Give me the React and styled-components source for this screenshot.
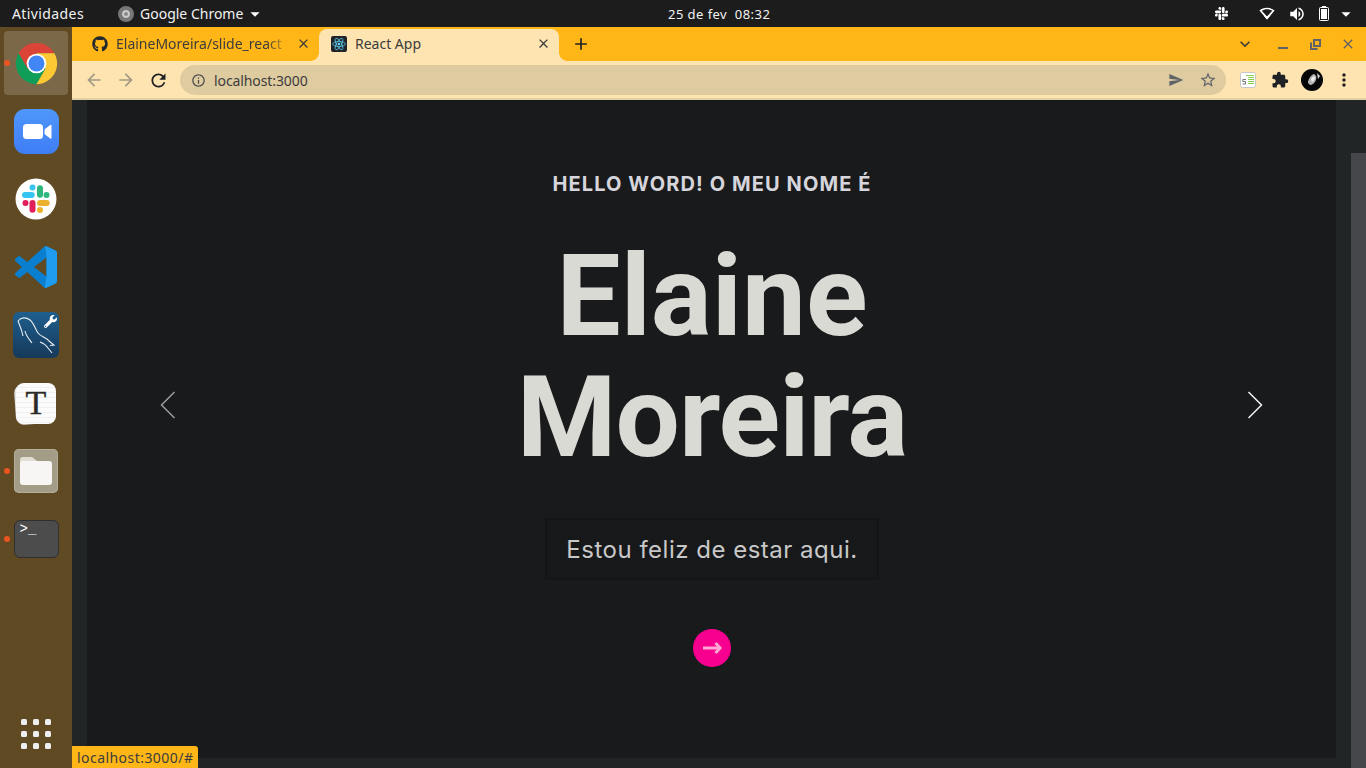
import styled, { createGlobalStyle } from "styled-components"
import {
  MdAdd,
  MdArrowBack,
  MdArrowForward,
  MdArrowDropDown,
  MdClose,
  MdExpandMore,
  MdExtension,
  MdInfoOutline,
  MdMoreVert,
  MdRefresh,
  MdSend,
  MdStarBorder,
  MdVolumeUp,
} from "react-icons/md"
import { FaGithub, FaSlack, FaWrench } from "react-icons/fa"

const GlobalStyle = createGlobalStyle`
  html, body {
    margin: 0;
    padding: 0;
    overflow: hidden;
    background: #1c1c1c;
  }
  * {
    box-sizing: border-box;
  }
`

const uiFont = `"Noto Sans", "Open Sans", sans-serif`
const pageFont = `Inter, "Liberation Sans", sans-serif`

function ChromeLogo() {
  return (
    <svg width="45" height="45" viewBox="0 0 48 48">
      <path fill="#db4437" d="M4.95 13A22 22 0 0 1 43.05 13H24L14.47 29.5Z" />
      <path fill="#0f9d58" d="M4.95 13L14.47 29.5H33.53L24 46A22 22 0 0 1 4.95 13Z" />
      <path fill="#fcc934" d="M43.05 13A22 22 0 0 1 24 46L33.53 29.5 24 13Z" />
      <circle cx="24" cy="24" r="10.5" fill="#fff" />
      <circle cx="24" cy="24" r="8.5" fill="#4285f4" />
    </svg>
  )
}

function ZoomLogo() {
  return (
    <svg width="45" height="45" viewBox="0 0 45 45">
      <defs>
        <linearGradient id="zoomBg" x1="0" y1="0" x2="0" y2="1">
          <stop offset="0" stopColor="#4f97fb" />
          <stop offset="1" stopColor="#3f7df5" />
        </linearGradient>
      </defs>
      <rect width="45" height="45" rx="11" fill="url(#zoomBg)" />
      <rect x="9" y="15" width="20" height="15" rx="3.5" fill="#fff" />
      <path d="M31 20.5 37 16V29.5L31 25Z" fill="#fff" strokeLinejoin="round" stroke="#fff" />
    </svg>
  )
}

function SlackLogo() {
  return (
    <svg width="42" height="42" viewBox="0 0 42 42">
      <circle cx="21" cy="21" r="20.5" fill="#fff" />
      <g fill="none" strokeWidth="6" strokeLinecap="round">
        <path stroke="#36c5f0" d="M10 17h6.7M17.5 9.5h.01" />
        <path stroke="#2eb67d" d="M25 10.3v6.4M31.5 17h.01" />
        <path stroke="#ecb22e" d="M25 25h6.7M25 32h.01" />
        <path stroke="#e01e5a" d="M17.5 25v6.7M10.5 25h.01" />
      </g>
    </svg>
  )
}

function VsCodeLogo() {
  return (
    <svg width="42" height="42" viewBox="0 0 100 100">
      <path
        fill="#0a7fd0"
        fillRule="evenodd"
        d="M70.9 99.3a6.2 6.2 0 0 0 5-.2l20.6-9.9a6.25 6.25 0 0 0 3.5-5.6V16.4a6.25 6.25 0 0 0-3.5-5.6L75.9.9a6.2 6.2 0 0 0-7.1 1.2L29.4 38.1 12.2 25a4.2 4.2 0 0 0-5.3.2L1.4 30.3a4.2 4.2 0 0 0 0 6.2L16.3 50 1.4 63.5a4.2 4.2 0 0 0 0 6.2l5.5 5a4.2 4.2 0 0 0 5.3.2l17.2-13L68.8 98a6.2 6.2 0 0 0 2.1 1.3ZM75 27.3 45.1 50 75 72.7V27.3Z"
      />
      <path
        fill="#1f9cf0"
        d="M72 .4 75.9.9l20.6 9.9a6.25 6.25 0 0 1 3.5 5.6v67.2a6.25 6.25 0 0 1-3.5 5.6L75.9 99.1a6.2 6.2 0 0 1-5 .2L75 72.7V27.3Z"
      />
    </svg>
  )
}

function DolphinIcon() {
  return (
    <svg width="46" height="46" viewBox="0 0 46 46" fill="none" stroke="#e8eef3" strokeWidth="1.1">
      <path d="M5 9C8 5 13 5 17 8c4 3 5 9 8 13 3 4 8 4 11 8l5 4-4 .5" />
      <path d="M5 9c2 5 4 9 5 15" />
      <path d="M12 19c1 5 4 8 7 12" />
      <path d="M27 30c3 1 6 3 8 6l4 5" />
    </svg>
  )
}

function FolderIcon() {
  return (
    <svg width="34" height="30" viewBox="0 0 34 30">
      <path fill="#e2ddd3" d="M1 4a3 3 0 0 1 3-3h9l5 4v6H1Z" />
      <rect x="1" y="5" width="32" height="24" rx="3" fill="#f7f6f4" />
    </svg>
  )
}

function ReactFavicon() {
  return (
    <svg width="16" height="16" viewBox="0 0 16 16">
      <rect width="16" height="16" rx="2" fill="#20232a" />
      <g fill="none" stroke="#61dafb" strokeWidth=".7">
        <ellipse cx="8" cy="8" rx="6.4" ry="2.5" />
        <ellipse cx="8" cy="8" rx="6.4" ry="2.5" transform="rotate(60 8 8)" />
        <ellipse cx="8" cy="8" rx="6.4" ry="2.5" transform="rotate(120 8 8)" />
      </g>
      <circle cx="8" cy="8" r="1.3" fill="#61dafb" />
    </svg>
  )
}

function RestoreIcon() {
  return (
    <svg width="11" height="11" viewBox="0 0 11 11" fill="none" stroke="#5f6368" strokeWidth="2">
      <rect x="4" y="1" width="6" height="6" />
      <path d="M1 3.5V10h6.5" />
    </svg>
  )
}

function WifiIcon() {
  return (
    <svg width="16" height="13" viewBox="0 0 16 13">
      <path d="M8 12.5 .4 3.6C2.4 1.8 5 .8 8 .8s5.6 1 7.6 2.8Z" fill="#fff" />
      <path d="M8 9.6 2.8 3.8C4.2 2.9 6 2.3 8 2.3s3.8.6 5.2 1.5Z" fill="#1c1c1c" />
      <path d="M8 12.5 5 9h6Z" fill="#fff" />
    </svg>
  )
}

function BatteryIcon() {
  return (
    <svg width="10" height="15" viewBox="0 0 10 15">
      <rect x="3" width="4" height="1.5" fill="#fff" />
      <rect x=".5" y="1.5" width="9" height="13" rx="1" fill="none" stroke="#fff" />
      <rect x="2" y="3" width="6" height="10" fill="#fff" />
    </svg>
  )
}

function SheetIcon() {
  return (
    <svg width="16" height="16" viewBox="0 0 16 16">
      <rect x=".5" y=".5" width="15" height="15" rx="2" fill="#fff" stroke="#c6c6c6" />
      <path d="M6 3.5h8M8 5.5h6M8 7.5h6M8 9.5h6M8 11.5h6" stroke="#86d04f" strokeWidth="1" />
      <path d="M6 7.5H2.8V9.5H5.5V12H2.5" fill="none" stroke="#777" strokeWidth="1" />
    </svg>
  )
}

function AvatarIcon() {
  return (
    <svg width="22" height="22" viewBox="0 0 22 22">
      <circle cx="11" cy="11" r="11" fill="#050505" />
      <path d="M7 14c0-4 3-8 6-9 2 1 3 3 2 6-1 3-4 5-6 5Z" fill="#b5b5b5" />
      <path d="M10 10c1-2 3-3 4-2 0 2-1 4-3 5Z" fill="#eeeeee" />
      <path d="M16 4l3 3-2 3Z" fill="#d8d8d8" />
    </svg>
  )
}

function BigChevron({ left }) {
  return (
    <svg width="16" height="28" viewBox="0 0 16 28" fill="none" stroke="currentColor" strokeWidth="1.5">
      <path d={left ? "M14.5 1 1.5 14l13 13" : "M1.5 1l13 13-13 13"} />
    </svg>
  )
}

function NextArrow() {
  return (
    <svg width="19" height="12" viewBox="0 0 19 12" fill="none" stroke="#ffa8d6" strokeWidth="3">
      <path d="M0 6h16" />
      <path d="M12.5 1 17 6l-4.5 5" />
    </svg>
  )
}

export default function App() {
  return (
    <Screen>
      <GlobalStyle />
      <TopBar>
        <TopGroup>
          <Activities>Atividades</Activities>
          <AppMenu>
            <GrayChrome />
            Google Chrome
            <MdArrowDropDown size={22} color="#fff" />
          </AppMenu>
        </TopGroup>
        <Clock>25 de fev&nbsp;&nbsp;08:32</Clock>
        <Tray>
          <FaSlack size={15} />
          <WifiIcon />
          <MdVolumeUp size={18} />
          <BatteryIcon />
          <MdArrowDropDown size={22} />
        </Tray>
      </TopBar>

      <Body>
        <Dock>
          <DockSlot $running>
            <ActiveTile>
              <ChromeLogo />
            </ActiveTile>
          </DockSlot>
          <DockSlot>
            <ZoomLogo />
          </DockSlot>
          <DockSlot>
            <SlackLogo />
          </DockSlot>
          <DockSlot>
            <VsCodeLogo />
          </DockSlot>
          <DockSlot>
            <MysqlTile>
              <DolphinIcon />
              <Wrench>
                <FaWrench size={13} color="#fff" />
              </Wrench>
            </MysqlTile>
          </DockSlot>
          <DockSlot>
            <TyporaTile>T</TyporaTile>
          </DockSlot>
          <DockSlot $running>
            <FilesTile>
              <FolderIcon />
            </FilesTile>
          </DockSlot>
          <DockSlot $running>
            <TerminalTile>&gt;_</TerminalTile>
          </DockSlot>
          <AppGrid>
            {Array.from({ length: 9 }).map((_, i) => (
              <GridDot key={i} />
            ))}
          </AppGrid>
        </Dock>

        <Browser>
          <TabStrip>
            <Tab>
              <FaGithub size={16} color="#24292e" />
              <TabTitle $faded>ElaineMoreira/slide_react</TabTitle>
              <MdClose size={15} color="#3c3c3c" />
            </Tab>
            <Tab $active>
              <ReactFavicon />
              <TabTitle>React App</TabTitle>
              <MdClose size={15} color="#3c3c3c" />
            </Tab>
            <NewTab>
              <MdAdd size={20} color="#202124" />
            </NewTab>
            <WindowControls>
              <MdExpandMore size={20} color="#3c3c3c" />
              <Minimize />
              <RestoreIcon />
              <MdClose size={16} color="#5f6368" />
            </WindowControls>
          </TabStrip>

          <Toolbar>
            <NavButtons>
              <MdArrowBack size={20} color="#a39a85" />
              <MdArrowForward size={20} color="#a39a85" />
              <MdRefresh size={21} color="#202124" />
            </NavButtons>
            <Omnibox>
              <MdInfoOutline size={15} color="#4a4a4a" />
              <Url>localhost:3000</Url>
              <MdSend size={16} color="#5f6368" />
              <MdStarBorder size={18} color="#5f6368" />
            </Omnibox>
            <Extensions>
              <SheetIcon />
              <MdExtension size={18} color="#202124" />
              <AvatarIcon />
              <MdMoreVert size={20} color="#202124" />
            </Extensions>
          </Toolbar>

          <Viewport>
            <Page>
              <Slide>
                <SideArrow $dim>
                  <BigChevron left />
                </SideArrow>
                <SlideContent>
                  <Greeting>HELLO WORD! O MEU NOME É</Greeting>
                  <Name>
                    <NameLine $spacing="0">Elaine</NameLine>
                    <NameLine $spacing="-1px">Moreira</NameLine>
                  </Name>
                  <Message>Estou feliz de estar aqui.</Message>
                  <RoundButton>
                    <NextArrow />
                  </RoundButton>
                </SlideContent>
                <SideArrow>
                  <BigChevron />
                </SideArrow>
              </Slide>
            </Page>
            <Scrollbar>
              <Thumb />
            </Scrollbar>
            <StatusBubble>localhost:3000/#</StatusBubble>
          </Viewport>
        </Browser>
      </Body>
    </Screen>
  )
}

const Screen = styled.div`
  width: 1366px;
  height: 768px;
  display: flex;
  flex-direction: column;
  overflow: hidden;
  font-family: ${uiFont};
`

const TopBar = styled.header`
  height: 27px;
  flex: none;
  display: grid;
  grid-template-columns: 668px auto 1fr;
  align-items: center;
  background: #1c1c1c;
  color: #f2f2f2;
  font-size: 14px;
`

const TopGroup = styled.div`
  display: flex;
  align-items: center;
`

const Activities = styled.span`
  margin-left: 12px;
  width: 106px;
  letter-spacing: 0.4px;
`

const AppMenu = styled.div`
  display: flex;
  align-items: center;
  gap: 6px;
  svg {
    margin-left: -5px;
  }
`

const GrayChrome = styled.span`
  width: 16px;
  height: 16px;
  border-radius: 50%;
  background: #8a8a8a;
  border: 4px solid #777;
  box-shadow: inset 0 0 0 2px #ccc;
`

const Clock = styled.span`
  font-size: 13px;
  letter-spacing: 0.45px;
`

const Tray = styled.div`
  display: flex;
  align-items: center;
  justify-content: flex-end;
  gap: 13px;
  padding-right: 9px;
  color: #fff;
  svg:first-child {
    margin-right: 17px;
  }
  svg:last-child {
    margin-left: -7px;
  }
`

const Body = styled.div`
  flex: 1;
  min-height: 0;
  display: flex;
`

const Dock = styled.nav`
  width: 72px;
  flex: none;
  display: flex;
  flex-direction: column;
  padding-top: 2px;
  background: #5f4a24;
`

const DockSlot = styled.div`
  position: relative;
  isolation: isolate;
  height: 68px;
  display: flex;
  align-items: center;
  justify-content: center;
  &::before {
    content: "";
    display: ${(p) => (p.$running ? "block" : "none")};
    position: absolute;
    left: 4px;
    top: 31px;
    width: 6px;
    height: 6px;
    border-radius: 50%;
    background: #e95420;
  }
`

const ActiveTile = styled.div`
  width: 64px;
  height: 64px;
  display: flex;
  align-items: center;
  justify-content: center;
  border-radius: 4px;
  background: #7b6849;
`

const MysqlTile = styled.div`
  position: relative;
  width: 46px;
  height: 46px;
  border-radius: 6px;
  background: linear-gradient(#1f5f8e, #16395a);
  line-height: 0;
`

const Wrench = styled.span`
  position: absolute;
  top: 3px;
  right: 2px;
`

const TyporaTile = styled.div`
  position: relative;
  width: 40px;
  height: 41px;
  display: flex;
  align-items: center;
  justify-content: center;
  border-radius: 8px;
  background: repeating-linear-gradient(#fbfbfb 0 4px, #f0f0f0 4px 5px);
  color: #2a2a2a;
  font: 34px/1 "Liberation Serif", serif;
  -webkit-text-stroke: 0.4px #2a2a2a;
  &::before {
    content: "";
    position: absolute;
    inset: 1px 1px 0 -1px;
    z-index: -1;
    border-radius: 8px;
    background: #e4e4e4;
    transform: rotate(-4deg);
  }
`

const FilesTile = styled.div`
  width: 44px;
  height: 44px;
  display: flex;
  align-items: center;
  justify-content: center;
  border-radius: 5px;
  background: #a39c87;
  box-shadow: inset 0 0 0 1px #b3ad9a;
`

const TerminalTile = styled.div`
  width: 45px;
  height: 38px;
  padding-left: 5px;
  border-radius: 6px;
  border: 1px solid #2f2f2f;
  background: #4c4c4c;
  color: #fff;
  font: 14px/17px "Liberation Mono", monospace;
`

const AppGrid = styled.div`
  margin: auto auto 19px;
  display: grid;
  grid-template-columns: repeat(3, 6px);
  gap: 6px;
`

const GridDot = styled.span`
  width: 6px;
  height: 6px;
  border-radius: 1.5px;
  background: #eeeeee;
`

const Browser = styled.main`
  flex: 1;
  min-width: 0;
  display: flex;
  flex-direction: column;
`

const TabStrip = styled.div`
  height: 34px;
  flex: none;
  display: flex;
  align-items: flex-end;
  padding-left: 7px;
  background: #ffb616;
`

const Tab = styled.div`
  position: relative;
  width: 240px;
  height: 32px;
  display: flex;
  align-items: center;
  gap: 8px;
  padding: 0 8px 3px ${(p) => (p.$active ? "12px" : "13px")};
  border-radius: 8px 8px 0 0;
  background: ${(p) => (p.$active ? "#fee4b0" : "transparent")};
  color: #3c3c3c;
  font-size: 14px;
  &::before,
  &::after {
    content: "";
    display: ${(p) => (p.$active ? "block" : "none")};
    position: absolute;
    bottom: 0;
    width: 8px;
    height: 8px;
  }
  &::before {
    right: 100%;
    background: radial-gradient(circle at 0 0, #ffb616 7.5px, #fee4b0 8px);
  }
  &::after {
    left: 100%;
    background: radial-gradient(circle at 100% 0, #ffb616 7.5px, #fee4b0 8px);
  }
`

const TabTitle = styled.span`
  flex: 1;
  min-width: 0;
  overflow: hidden;
  white-space: nowrap;
  margin-right: ${(p) => (p.$faded ? "-3px" : "0")};
  mask-image: ${(p) => (p.$faded ? "linear-gradient(to right, #000 86%, transparent)" : "none")};
`

const NewTab = styled.div`
  width: 44px;
  height: 32px;
  display: flex;
  align-items: center;
  justify-content: center;
  padding-bottom: 3px;
`

const WindowControls = styled.div`
  height: 34px;
  margin-left: auto;
  display: grid;
  grid-template-columns: 44px 32px 32px 34px;
  justify-items: center;
  align-items: center;
  padding-right: 1px;
`

const Minimize = styled.span`
  width: 10px;
  height: 2px;
  margin-top: 8px;
  background: #5f6368;
`

const Toolbar = styled.div`
  height: 39px;
  flex: none;
  display: flex;
  align-items: center;
  padding-top: 1px;
  background: #fee4b0;
  border-bottom: 2px solid #e4d0a6;
`

const NavButtons = styled.div`
  width: 108px;
  display: grid;
  grid-template-columns: repeat(3, 32px);
  justify-items: center;
  padding-left: 6px;
`

const Omnibox = styled.div`
  width: 1046px;
  height: 30px;
  display: flex;
  align-items: center;
  padding: 0 9px 0 11px;
  border-radius: 15px;
  background: #dfcba0;
  svg:last-child {
    margin-left: 15px;
  }
`

const Url = styled.span`
  flex: 1;
  margin-left: 8px;
  color: #3c3c3c;
  font-size: 14px;
  letter-spacing: -0.1px;
`

const Extensions = styled.div`
  flex: 1;
  display: grid;
  grid-template-columns: repeat(4, 32px);
  justify-items: center;
  align-items: center;
  padding-left: 6px;
`

const Viewport = styled.div`
  position: relative;
  flex: 1;
  min-height: 0;
  display: flex;
  background: #212526;
`

const Page = styled.div`
  flex: 1;
  min-width: 0;
  display: flex;
  padding: 0 15px 10px;
`

const Slide = styled.section`
  flex: 1;
  display: flex;
  justify-content: space-between;
  padding: 0 73px 48px;
  background: #191a1c;
  font-family: ${pageFont};
`

const SideArrow = styled.div`
  align-self: center;
  line-height: 0;
  color: ${(p) => (p.$dim ? "#9a9b9c" : "#f2f2f2")};
`

const SlideContent = styled.div`
  display: flex;
  flex-direction: column;
  align-items: center;
  padding: 72px 0 0 1px;
`

const Greeting = styled.h2`
  margin: 0;
  color: #d6d5dc;
  font-size: 20px;
  line-height: 24px;
  font-weight: 700;
  letter-spacing: 1.1px;
`

const Name = styled.h1`
  margin: 40px 0 0;
  color: #dadad5;
  font-family: Roboto, "Liberation Sans", sans-serif;
  font-size: 114px;
  line-height: 121px;
  font-weight: 700;
  text-align: center;
  filter: blur(0.5px);
`

const NameLine = styled.span`
  display: block;
  letter-spacing: ${(p) => p.$spacing};
`

const Message = styled.p`
  margin: 40px 0 0;
  width: 334px;
  height: 62px;
  display: flex;
  align-items: center;
  justify-content: center;
  background: #17181a;
  border: 2px solid #141517;
  color: #c9c8c8;
  font-size: 24px;
  letter-spacing: 0.5px;
`

const RoundButton = styled.button`
  margin-top: 49px;
  width: 38px;
  height: 38px;
  padding: 0;
  display: flex;
  align-items: center;
  justify-content: center;
  border: none;
  border-radius: 50%;
  background: #f8008f;
`

const Scrollbar = styled.div`
  width: 15px;
  flex: none;
  padding-top: 53px;
`

const Thumb = styled.div`
  height: 100%;
  background: #45474b;
`

const StatusBubble = styled.div`
  position: absolute;
  left: 0;
  bottom: 0;
  height: 22px;
  padding: 0 5px;
  display: flex;
  align-items: center;
  border-radius: 0 3px 0 0;
  background: #ffb616;
  color: #3c3c3c;
  font-size: 14px;
  letter-spacing: 0.45px;
`
